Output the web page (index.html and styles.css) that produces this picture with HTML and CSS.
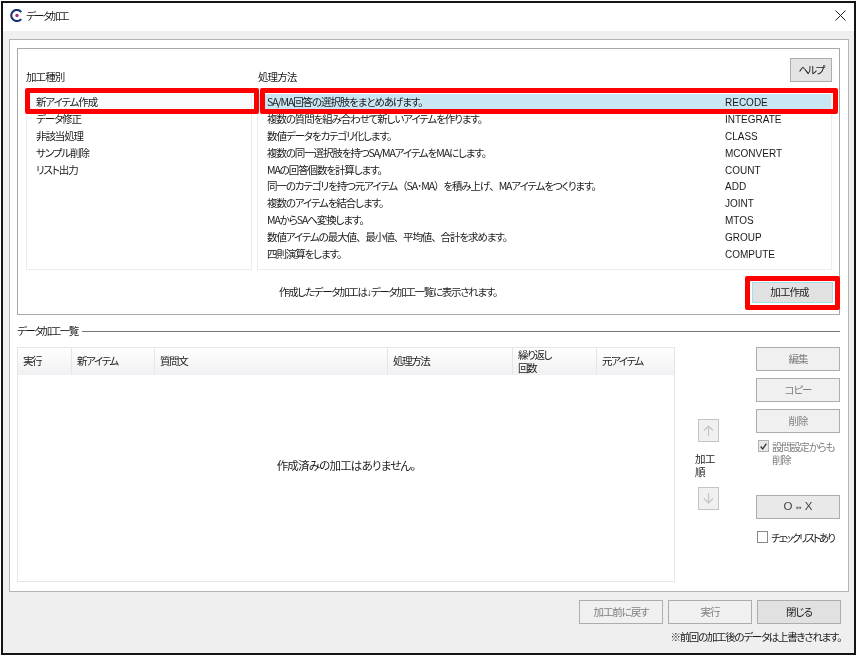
FILE: index.html
```html
<!DOCTYPE html>
<html lang="ja">
<head>
<meta charset="utf-8">
<title>データ加工</title>
<link rel="stylesheet" href="styles.css">
</head>
<body>
<div class="window">
  <header class="titlebar">
    <svg class="logo" width="13" height="13" viewBox="0 0 13 13"><path d="M11.2 3A5.6 5.6 0 1 0 11.2 10" fill="none" stroke="#14306e" stroke-width="2"/><circle cx="7" cy="6.5" r="1.7" fill="#a0307a"/></svg>
    <span class="title">データ加工</span>
    <svg class="close" width="11" height="11" viewBox="0 0 11 11"><path d="M.5.5l10 10M10.5.5l-10 10" stroke="#222" stroke-width="1" fill="none"/></svg>
  </header>
  <main class="content">
    <div class="panel">
      <section class="group">
        <div class="mark mark-type"></div>
        <div class="mark mark-method"></div>
        <div class="mark mark-create"></div>
        <div class="pickers">
          <div class="picker">
            <div class="picker-head"><span class="label">加工種別</span></div>
            <div class="list list-type">
              <div class="row selected-plain">新アイテム作成</div>
              <div class="row">データ修正</div>
              <div class="row">非該当処理</div>
              <div class="row">サンプル削除</div>
              <div class="row">リスト出力</div>
            </div>
          </div>
          <div class="picker picker-wide">
            <div class="picker-head"><span class="label label-method">処理方法</span><button class="btn btn-help">ヘルプ</button></div>
            <div class="list list-method">
              <div class="row selected"><span class="desc">SA/MA回答の選択肢をまとめあげます。</span><span class="code">RECODE</span></div>
              <div class="row"><span class="desc">複数の質問を組み合わせて新しいアイテムを作ります。</span><span class="code">INTEGRATE</span></div>
              <div class="row"><span class="desc">数値データをカテゴリ化します。</span><span class="code">CLASS</span></div>
              <div class="row"><span class="desc">複数の同一選択肢を持つSA/MAアイテムをMAにします。</span><span class="code">MCONVERT</span></div>
              <div class="row"><span class="desc">MAの回答個数を計算します。</span><span class="code">COUNT</span></div>
              <div class="row"><span class="desc">同一のカテゴリを持つ元アイテム<span class="fw">（</span>SA･MA<span class="fw">）</span>を積み上げ<span class="fw">、</span>MAアイテムをつくります。</span><span class="code">ADD</span></div>
              <div class="row"><span class="desc">複数のアイテムを結合します。</span><span class="code">JOINT</span></div>
              <div class="row"><span class="desc">MAからSAへ変換します。</span><span class="code">MTOS</span></div>
              <div class="row"><span class="desc">数値アイテムの最大値<span class="fw">、</span>最小値<span class="fw">、</span>平均値<span class="fw">、</span>合計を求めます。</span><span class="code">GROUP</span></div>
              <div class="row"><span class="desc">四則演算をします。</span><span class="code">COMPUTE</span></div>
            </div>
          </div>
        </div>
        <div class="group-foot">
          <span class="note">作成したデータ加工は<span class="down">↓</span>データ加工一覧に表示されます。</span>
          <button class="btn btn-create">加工作成</button>
        </div>
      </section>
      <div class="section-title"><span>データ加工一覧</span><i class="rule"></i></div>
      <div class="work">
        <div class="table">
          <div class="thead">
            <div class="th">実行</div>
            <div class="th">新アイテム</div>
            <div class="th">質問文</div>
            <div class="th">処理方法</div>
            <div class="th th-two">繰り返し<br>回数</div>
            <div class="th">元アイテム</div>
          </div>
          <div class="tbody">作成済みの加工はありません。</div>
        </div>
        <div class="order">
          <button class="btn btn-arrow" aria-label="上へ"><svg width="13" height="13" viewBox="0 0 13 13"><path d="M6.5 12V2M2 6.5l4.5-4.5 4.5 4.5" fill="none" stroke="#c4c4c4" stroke-width="1.2"/></svg></button>
          <div class="order-label">加工<br>順</div>
          <button class="btn btn-arrow" aria-label="下へ"><svg width="13" height="13" viewBox="0 0 13 13"><path d="M6.5 1v10M2 6.5l4.5 4.5 4.5-4.5" fill="none" stroke="#c4c4c4" stroke-width="1.2"/></svg></button>
        </div>
        <div class="actions">
          <button class="btn btn-side off">編集</button>
          <button class="btn btn-side off">コピー</button>
          <button class="btn btn-side off">削除</button>
          <label class="check check-off"><span class="box"><svg width="11" height="11" viewBox="0 0 11 11"><path d="M2 5.5l2.5 3L9 2" fill="none" stroke="#333" stroke-width="1.6"/></svg></span><span>設問設定からも<br>削除</span></label>
          <button class="btn btn-side btn-ox">O <span class="ox-arrow">⇔</span> X</button>
          <label class="check check-list"><span class="box"></span><span>チェックリストあり</span></label>
        </div>
      </div>
    </div>
    <footer class="foot">
      <div class="foot-buttons">
        <button class="btn btn-foot off">加工前に戻す</button>
        <button class="btn btn-foot off">実行</button>
        <button class="btn btn-foot btn-close">閉じる</button>
      </div>
      <div class="foot-note">※前回の加工後のデータは上書きされます。</div>
    </footer>
  </main>
</div>
</body>
</html>
```
FILE: styles.css
```css
* { box-sizing: border-box; }
html, body { margin: 0; padding: 0; background: #fff; }
body {
  font-family: "Noto Sans CJK JP", "Liberation Sans", sans-serif;
  font-size: 10.5px;
  font-feature-settings: "palt";
  letter-spacing: -1.1px;
  color: #1a1a1a;
}
.window {
  margin: 1px;
  width: 855px;
  height: 654px;
  border: 2px solid #141414;
  background: #efefef;
  display: flex;
  flex-direction: column;
  filter: blur(0.3px);
}
.titlebar {
  height: 28px;
  flex: none;
  background: #fff;
  display: flex;
  align-items: center;
  padding: 0 6px 3px 7px;
}
.title { margin-left: 3px; font-size: 10.5px; letter-spacing: -1.7px; }
.close { margin-left: auto; margin-right: 2px; }
.content { flex: 1; padding: 8px 5px 0 6px; }
.panel {
  height: 553px;
  background: #fff;
  border: 1px solid #b4b4b4;
  padding: 8px 8px 0 7px;
}
.group {
  position: relative;
  height: 267px;
  border: 1px solid #a8a8a8;
  padding: 9px 7px 0 8px;
}
.pickers { display: flex; gap: 5px; }
.picker { width: 226px; flex: none; }
.picker-wide { width: 575px; }
.picker-head {
  height: 30px;
  display: flex;
  justify-content: space-between;
  align-items: flex-start;
}
.label { display: block; padding-top: 11px; line-height: 16px; letter-spacing: -0.9px; }
.label-method { margin-left: 1px; }
.list {
  height: 182px;
  border: 1px solid #ececec;
  padding-top: 5px;
}
.list-type .row { padding-left: 9px; }
.list-method .row { padding-left: 9px; }
.row { height: 16.9px; line-height: 16.9px; display: flex; white-space: nowrap; }
.desc { width: 458px; flex: none; }
.fw { font-feature-settings: normal; }
.code {
  font-family: "Liberation Sans", sans-serif;
  font-size: 10px;
  letter-spacing: 0;
  padding-top: 1px;
}
.selected { background: #c9e6f5; }
.selected-plain { background: #f7fbfd; }
.mark {
  position: absolute;
  border: 5px solid #f00;
  border-radius: 2px;
  pointer-events: none;
}
.mark-type { left: 7px; top: 39px; width: 234px; height: 26px; }
.mark-method { left: 242px; top: 39px; width: 578px; height: 26px; }
.mark-create { left: 727px; top: 227px; width: 95px; height: 34px; }
.btn {
  display: block;
  padding: 0 0 2px;
  margin: 0;
  font: inherit;
  font-feature-settings: inherit;
  letter-spacing: inherit;
  color: #1a1a1a;
  background: #e4e4e4;
  border: 1px solid #adadad;
}
.btn-help { width: 42px; height: 24px; letter-spacing: -1.6px; }
.group-foot {
  display: flex;
  align-items: flex-start;
  padding: 12px 0 0 253px;
}
.note { line-height: 20px; letter-spacing: -1.3px; }
.down {
  font-family: "Liberation Sans", sans-serif;
  font-size: 10px;
  letter-spacing: 0;
  margin-right: -1px;
}
.btn-create {
  margin-left: auto;
  margin-right: -1px;
  width: 81px;
  height: 21px;
  padding-right: 6px;
  letter-spacing: -0.9px;
  background: #e1e1e1;
  border-color: #9fe0ea;
}
.section-title {
  margin-top: 8px;
  height: 16px;
  display: flex;
  align-items: center;
  gap: 4px;
  line-height: 16px;
  letter-spacing: -1.5px;
}
.rule { flex: 1; height: 1px; background: #777; }
.work { display: flex; margin-top: 8px; }
.table {
  width: 658px;
  height: 235px;
  flex: none;
  border: 1px solid #e6e6e6;
  display: flex;
  flex-direction: column;
}
.thead {
  height: 27px;
  flex: none;
  display: grid;
  grid-template-columns: 54px 83px 233px 125px 84px 1fr;
  background: linear-gradient(#fff, #f0f0f2);
  letter-spacing: -1.4px;
}
.th {
  padding-left: 5px;
  line-height: 26px;
  border-right: 1px solid #e6e6e6;
}
.th:last-child { border-right: 0; }
.th-two { line-height: 13px; }
.tbody {
  flex: 1;
  display: flex;
  align-items: center;
  justify-content: center;
  padding-bottom: 27px;
  font-size: 11.5px;
  letter-spacing: -0.8px;
}
.order {
  width: 30px;
  margin-left: 20px;
  padding-top: 72px;
}
.btn-arrow {
  width: 21px;
  height: 23px;
  margin-left: 3px;
  padding: 0;
  background: #f0f0f0;
  border-color: #c4c4c4;
  display: flex;
  align-items: center;
  justify-content: center;
}
.order-label { margin: 10px 0 9px; line-height: 13px; letter-spacing: -0.6px; }
.actions { margin-left: auto; width: 84px; }
.btn-side { width: 84px; height: 24px; margin-bottom: 7px; background: #f0f0f0; }
.btn.off { color: #808080; background: #f0f0f0; }
.check { display: flex; gap: 3px; line-height: 13px; white-space: nowrap; }
.box {
  width: 11px;
  height: 12px;
  flex: none;
  background: #fff;
  border: 1px solid #8a8a8a;
  display: flex;
  align-items: center;
  justify-content: center;
}
.check-off { margin: 2px 0 0 2px; height: 55px; color: #808080; letter-spacing: -1.3px; }
.check-off .box { background: #e8e8e8; border-color: #b0b0b0; }
.btn-ox {
  margin-bottom: 0;
  background: #e9e9e9;
  color: #444;
  font-family: "Liberation Sans", sans-serif;
  font-size: 11.5px;
  letter-spacing: 0;
}
.ox-arrow { font-family: "DejaVu Sans", sans-serif; font-size: 7px; }
.check-list { margin: 12px 0 0 1px; letter-spacing: -2px; }
.foot { padding-right: 8px; margin-top: 8px; }
.foot-buttons { display: flex; justify-content: flex-end; gap: 5px; }
.btn-foot { width: 84px; height: 24px; }
.btn-close { background: #e1e1e1; }
.foot-note { margin-top: 5px; line-height: 16px; text-align: right; letter-spacing: -1.3px; }
```
